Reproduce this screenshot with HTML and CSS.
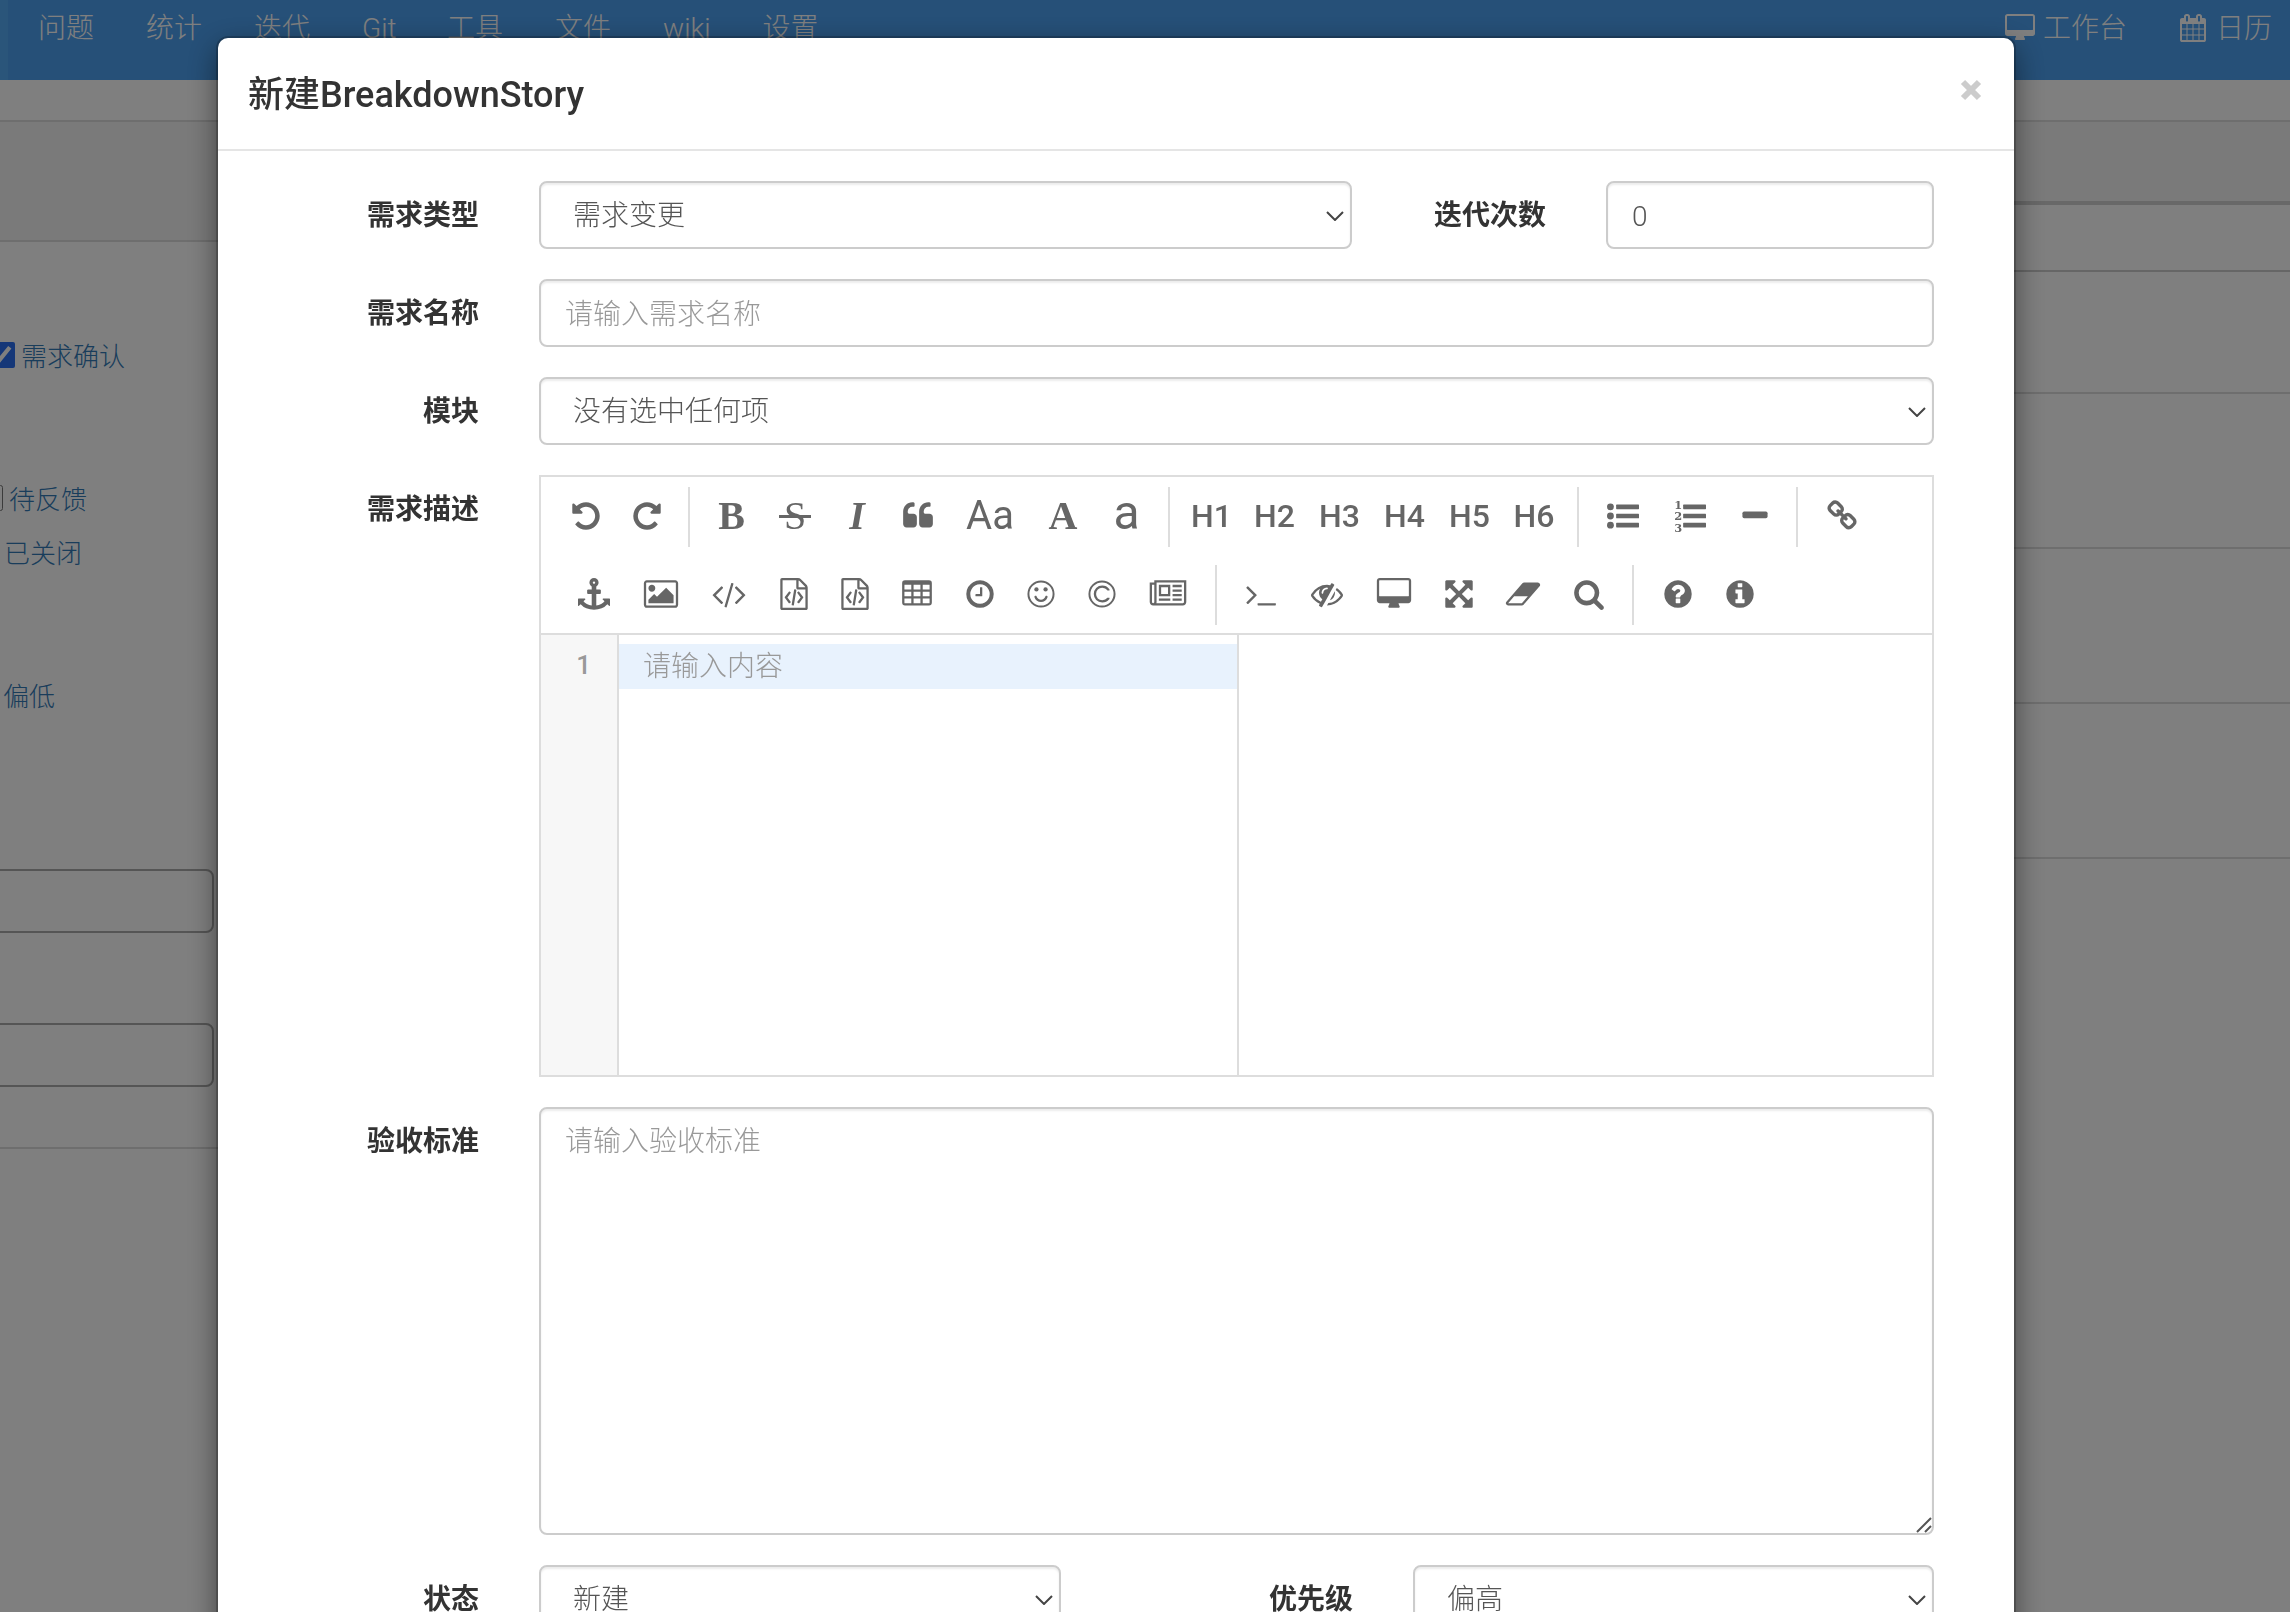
FILE: index.html
```html
<!DOCTYPE html>
<html lang="zh-CN">
<head>
<meta charset="utf-8">
<title>新建BreakdownStory</title>
<link rel="stylesheet" href="styles.css">
</head>
<body>
<svg width="0" height="0" class="sprite" aria-hidden="true">
  <symbol id="i-desktop" viewBox="0 0 1792 1792"><path d="M1728 992v-832q0-13-9.500-22.500t-22.500-9.500h-1600q-13 0-22.500 9.500t-9.500 22.500v832q0 13 9.500 22.500t22.500 9.500h1600q13 0 22.500-9.500t9.500-22.500zm128-832v1088q0 66-47 113t-113 47h-544q0 37 16 77.500t32 71 16 43.500q0 26-19 45t-45 19h-512q-26 0-45-19t-19-45q0-14 16-44t32-70 16-78h-544q-66 0-113-47t-47-113v-1088q0-66 47-113t113-47h1600q66 0 113 47t47 113z"/></symbol>
  <symbol id="i-undo" viewBox="0 0 1792 1792"><path d="M1664 896q0 156-61 298t-164 245-245 164-298 61q-172 0-327-72.500t-264-204.500q-7-10-6.500-22.500t8.500-20.500l137-138q10-9 25-9 16 2 23 12 73 95 179 147t225 52q104 0 198.500-40.500t163.500-109.500 109.500-163.500 40.500-198.500-40.500-198.500-109.500-163.500-163.500-109.500-198.500-40.500q-98 0-188 35.500t-160 101.500l137 138q31 30 14 69-17 40-59 40h-448q-26 0-45-19t-19-45v-448q0-42 40-59 39-17 69 14l130 129q107-101 244.500-156.500t284.500-55.500q156 0 298 61t245 164 164 245 61 298z"/></symbol>
  <symbol id="i-file" viewBox="0 0 1792 1792"><path d="M1596 380q28 28 48 76t20 88v1152q0 40-28 68t-68 28h-1344q-40 0-68-28t-28-68v-1600q0-40 28-68t68-28h896q40 0 88 20t76 48zm-444-244v376h376q-10-29-22-41l-313-313q-12-12-41-22zm384 1528v-1024h-416q-40 0-68-28t-28-68v-416h-768v1536h1280z"/><path transform="translate(128 0)" d="M480 768q8-11 21-12.500t24 6.500l51 38q11 8 12.500 21t-6.500 24l-182 243 182 243q8 11 6.500 24t-12.500 21l-51 38q-11 8-24 6.500t-21-12.500l-226-301q-14-19 0-38zm802 301q14 19 0 38l-226 301q-8 11-21 12.500t-24-6.500l-51-38q-11-8-12.500-21t6.500-24l182-243-182-243q-8-11-6.500-24t12.500-21l51-38q11-8 24-6.500t21 12.500zm-620 461q-13-2-20.500-13t-5.500-24l138-831q2-13 13-20.500t24-5.500l63 10q13 2 20.500 13t5.500 24l-138 831q-2 13-13 20.500t-24 5.500z"/></symbol>
</svg>
<div class="page">
  <header class="topbar">
    <nav class="topnav">
      <a href="#">问题</a><a href="#">统计</a><a href="#">迭代</a><a href="#">Git</a><a href="#">工具</a><a href="#">文件</a><a href="#">wiki</a><a href="#">设置</a>
    </nav>
    <nav class="topnav tools">
      <a href="#"><svg class="icon" viewBox="0 0 1792 1792"><path d="M1728 992v-832q0-13-9.500-22.500t-22.500-9.500h-1600q-13 0-22.500 9.500t-9.500 22.500v832q0 13 9.500 22.500t22.500 9.500h1600q13 0 22.500-9.500t9.500-22.500zm128-832v1088q0 66-47 113t-113 47h-544q0 37 16 77.500t32 71 16 43.500q0 26-19 45t-45 19h-512q-26 0-45-19t-19-45q0-14 16-44t32-70 16-78h-544q-66 0-113-47t-47-113v-1088q0-66 47-113t113-47h1600q66 0 113 47t47 113z"/></svg>工作台</a>
      <a href="#"><svg class="icon" viewBox="0 0 1792 1792"><path d="M192 1664h288v-288h-288v288zm352 0h320v-288h-320v288zm-352-352h288v-320h-288v320zm352 0h320v-320h-320v320zm-352-384h288v-288h-288v288zm736 736h320v-288h-320v288zm-384-736h320v-288h-320v288zm768 736h288v-288h-288v288zm-384-352h320v-320h-320v320zm-352-864v-288q0-13-9.500-22.500t-22.500-9.500h-64q-13 0-22.500 9.500t-9.500 22.500v288q0 13 9.500 22.500t22.500 9.500h64q13 0 22.500-9.500t9.500-22.500zm736 864h288v-320h-288v320zm-384-384h320v-288h-320v288zm384 0h288v-288h-288v288zm32-480v-288q0-13-9.500-22.500t-22.500-9.500h-64q-13 0-22.500 9.500t-9.500 22.500v288q0 13 9.500 22.500t22.500 9.500h64q13 0 22.500-9.500t9.500-22.500zm384-64v1280q0 52-38 90t-90 38h-1408q-52 0-90-38t-38-90v-1280q0-52 38-90t90-38h128v-96q0-66 47-113t113-47h64q66 0 113 47t47 113v96h384v-96q0-66 47-113t113-47h64q66 0 113 47t47 113v96h128q52 0 90 38t38 90z"/></svg>日历</a>
    </nav>
  </header>
  <div class="columns">
    <aside class="filters">
      <div class="filters-head"></div>
      <div class="filters-body">
        <label class="check confirm"><input type="checkbox" checked>需求确认</label>
        <label class="check feedback"><input type="checkbox">待反馈</label>
        <a class="check closed" href="#">已关闭</a>
        <a class="check low" href="#">偏低</a>
        <input class="filter-input" type="text" aria-label="开始">
        <input class="filter-input" type="text" aria-label="结束">
      </div>
    </aside>
    <main class="list">
      <div class="list-head"></div>
      <div class="list-title"></div>
      <div class="list-row first"></div>
      <div class="list-row"></div>
      <div class="list-row"></div>
      <div class="list-row"></div>
    </main>
  </div>
</div>

<div class="overlay">
  <section class="modal" role="dialog" aria-labelledby="dialog-title">
    <header class="modal-head">
      <h1 id="dialog-title">新建BreakdownStory</h1>
      <button class="close" type="button" aria-label="关闭"><svg viewBox="0 0 22 22"><path d="M3 3L19 19M19 3L3 19" stroke="currentColor" stroke-width="6"/></svg></button>
    </header>
    <form class="form">
      <div class="field">
        <label for="type">需求类型</label>
        <div class="control split-count">
          <div class="select"><select id="type"><option>需求变更</option></select><svg viewBox="0 0 18 10"><path d="M1 1l8 8 8-8"/></svg></div>
          <label for="count">迭代次数</label>
          <input id="count" class="text" type="text" value="0">
        </div>
      </div>
      <div class="field">
        <label for="name">需求名称</label>
        <div class="control"><input id="name" class="text" type="text" placeholder="请输入需求名称"></div>
      </div>
      <div class="field">
        <label for="module">模块</label>
        <div class="control"><div class="select"><select id="module"><option>没有选中任何项</option></select><svg viewBox="0 0 18 10"><path d="M1 1l8 8 8-8"/></svg></div></div>
      </div>
      <div class="field">
        <label for="desc">需求描述</label>
        <div class="control">
          <div class="editor">
            <div class="toolbar">
              <div class="tools-row">
                <button type="button" aria-label="撤销"><svg class="icon"><use href="#i-undo"/></svg></button>
                <button type="button" aria-label="重做"><svg class="icon" viewBox="0 0 1792 1792"><use href="#i-undo" width="1792" height="1792" transform="translate(1792 0) scale(-1 1)"/></svg></button>
                <span class="divider"></span>
                <button type="button" class="serif">B</button>
                <button type="button" class="serif strike w66">S</button>
                <button type="button" class="serif italic w58">I</button>
                <button type="button" class="w64" aria-label="引用"><svg class="icon" viewBox="0 0 1792 1792"><path d="M832 960v384q0 80-56 136t-136 56h-384q-80 0-136-56t-56-136v-704q0-104 40.500-198.500t109.500-163.500 163.500-109.500 198.500-40.500h64q26 0 45 19t19 45v128q0 26-19 45t-45 19h-64q-106 0-181 75t-75 181v32q0 40 28 68t68 28h224q80 0 136 56t56 136zm896 0v384q0 80-56 136t-136 56h-384q-80 0-136-56t-56-136v-704q0-104 40.500-198.500t109.500-163.500 163.500-109.500 198.500-40.500h64q26 0 45 19t19 45v128q0 26-19 45t-45 19h-64q-106 0-181 75t-75 181v32q0 40 28 68t68 28h224q80 0 136 56t56 136z"/></svg></button>
                <button type="button" class="case w80">Aa</button>
                <button type="button" class="serif w66">A</button>
                <button type="button" class="case lower">a</button>
                <span class="divider"></span>
                <button type="button" class="heading">H1</button>
                <button type="button" class="heading w65">H2</button>
                <button type="button" class="heading w65">H3</button>
                <button type="button" class="heading w65">H4</button>
                <button type="button" class="heading w65">H5</button>
                <button type="button" class="heading w64">H6</button>
                <span class="divider"></span>
                <button type="button" class="w66" aria-label="无序列表"><svg class="icon" viewBox="0 0 1792 1792"><circle cx="192" cy="384" r="192"/><circle cx="192" cy="896" r="192"/><circle cx="192" cy="1408" r="192"/><rect x="512" y="256" width="1280" height="256" rx="32"/><rect x="512" y="768" width="1280" height="256" rx="32"/><rect x="512" y="1280" width="1280" height="256" rx="32"/></svg></button>
                <button type="button" class="w68" aria-label="有序列表"><svg class="icon" viewBox="0 0 1792 1792"><g class="digits"><text x="10" y="496">1</text><text x="10" y="1136">2</text><text x="10" y="1776">3</text></g><rect x="512" y="256" width="1280" height="256" rx="32"/><rect x="512" y="768" width="1280" height="256" rx="32"/><rect x="512" y="1280" width="1280" height="256" rx="32"/></svg></button>
                <button type="button" aria-label="横线"><svg class="icon" viewBox="0 0 1792 1792"><rect x="192" y="640" width="1408" height="384" rx="96"/></svg></button>
                <span class="divider"></span>
                <button type="button" class="w66" aria-label="链接"><svg class="icon" viewBox="0 0 1792 1792"><path d="M1520 1216q0-40-28-68l-208-208q-28-28-68-28-42 0-72 32 3 3 19 18.500t21.500 21.500 15 19 13 25.500 3.500 27.500q0 40-28 68t-68 28q-15 0-27.500-3.500t-25.500-13-19-15-21.500-21.500-18.500-19q-33 31-33 73 0 40 28 68l206 207q27 27 68 27 40 0 68-26l147-146q28-28 28-67zm-703-705q0-40-28-68l-206-207q-28-28-68-28-39 0-68 27l-147 146q-28 28-28 67 0 40 28 68l208 208q27 27 68 27 42 0 72-31-3-3-19-18.500t-21.500-21.500-15-19-13-25.500-3.500-27.500q0-40 28-68t68-28q15 0 27.500 3.500t25.500 13 19 15 21.500 21.500 18.500 19q33-31 33-73zm895 705q0 120-85 203l-147 146q-83 83-203 83-121 0-204-85l-206-207q-83-83-83-203 0-123 88-209l-88-88q-86 88-208 88-120 0-204-84l-208-208q-84-84-84-204t85-203l147-146q83-83 203-83 121 0 204 85l206 207q83 83 83 203 0 123-88 209l88 88q86-88 208-88 120 0 204 84l208 208q84 84 84 204z"/></svg></button>
              </div>
              <div class="tools-row second">
                <button type="button" class="w66" aria-label="锚点"><svg class="icon" viewBox="0 0 1792 1792"><path d="M960 256q0-26-19-45t-45-19-45 19-19 45 19 45 45 19 45-19 19-45zm832 928v352q0 22-20 30-8 2-12 2-13 0-23-9l-93-93q-119 143-318.500 226.500t-429.500 83.500-429.500-83.500-318.500-226.500l-93 93q-9 9-23 9-4 0-12-2-20-8-20-30v-352q0-14 9-23t23-9h352q22 0 30 20 8 19-7 35l-100 100q67 91 189.500 153.500t271.500 82.500v-647h-192q-26 0-45-19t-19-45v-128q0-26 19-45t45-19h192v-163q-58-34-93-92.500t-35-128.500q0-106 75-181t181-75 181 75 75 181q0 70-35 128.500t-93 92.500v163h192q26 0 45 19t19 45v128q0 26-19 45t-45 19h-192v647q149-20 271.500-82.500t189.500-153.500l-100-100q-15-16-7-35 8-20 30-20h352q14 0 23 9t9 23z"/></svg></button>
                <button type="button" class="w68" aria-label="图片"><svg class="icon" viewBox="0 0 1792 1792"><path d="M576 576q0 80-56 136t-136 56-136-56-56-136 56-136 136-56 136 56 56 136zm1024 384v448h-1408v-192l320-320 160 160 512-512zm96-704h-1600q-13 0-22.500 9.500t-9.500 22.500v1216q0 13 9.500 22.500t22.500 9.500h1600q13 0 22.500-9.500t9.500-22.500v-1216q0-13-9.500-22.500t-22.500-9.500zm160 32v1216q0 66-47 113t-113 47h-1600q-66 0-113-47t-47-113v-1216q0-66 47-113t113-47h1600q66 0 113 47t47 113z"/></svg></button>
                <button type="button" class="w68" aria-label="行内代码"><svg class="icon" viewBox="0 0 1792 1792"><path d="M553 1399l-50 50q-10 10-23 10t-23-10l-466-466q-10-10-10-23t10-23l466-466q10-10 23-10t23 10l50 50q10 10 10 23t-10 23l-393 393 393 393q10 10 10 23t-10 23zm591-1067l-373 1291q-4 13-15.500 19.500t-23.500 2.500l-62-17q-13-4-19.500-15.500t-2.500-24.500l373-1291q4-13 15.500-19.500t23.500-2.500l62 17q13 4 19.500 15.500t2.500 24.500zm657 651l-466 466q-10 10-23 10t-23-10l-50-50q-10-10-10-23t10-23l393-393-393-393q-10-10-10-23t10-23l50-50q10-10 23-10t23 10l466 466q10 10 10 23t-10 23z"/></svg></button>
                <button type="button" aria-label="代码块"><svg class="icon"><use href="#i-file"/></svg></button>
                <button type="button" aria-label="预格式文本"><svg class="icon"><use href="#i-file"/></svg></button>
                <button type="button" class="w64" aria-label="表格"><svg class="icon" viewBox="0 0 1792 1792"><path fill-rule="evenodd" d="M224 128h1344q160 0 160 160v1088q0 160-160 160h-1344q-160 0-160-160v-1088q0-160 160-160zM192 384v256h384v-256zM704 384v256h384v-256zM1216 384v256h384v-256zM192 768v256h384v-256zM704 768v256h384v-256zM1216 768v256h384v-256zM192 1152v256h384v-256zM704 1152v256h384v-256zM1216 1152v256h384v-256z"/></svg></button>
                <button type="button" aria-label="时间"><svg class="icon" viewBox="0 0 1792 1792"><path d="M1024 544v448q0 14-9 23t-23 9h-320q-14 0-23-9t-9-23v-64q0-14 9-23t23-9h224v-352q0-14 9-23t23-9h64q14 0 23 9t9 23zm416 352q0-148-73-273t-198-198-273-73-273 73-198 198-73 273 73 273 198 198 273 73 273-73 198-198 73-273zm224 0q0 209-103 385.500t-279.500 279.500-385.500 103-385.500-103-279.500-279.500-103-385.500 103-385.500 279.500-279.500 385.500-103 385.500 103 279.500 279.500 103 385.500z"/></svg></button>
                <button type="button" aria-label="表情"><svg class="icon" viewBox="0 0 1792 1792"><circle class="line" cx="896" cy="896" r="704"/><circle cx="640" cy="640" r="120"/><circle cx="1152" cy="640" r="120"/><path d="M1262 1075q-37 121-138 195t-228 74-228-74-138-195q-8-25 4-48.500t38-31.500q25-8 48.500 4t31.500 38q25 80 92.500 129.500t151.500 49.500 151.500-49.500 92.500-129.500q8-26 32-38t49-4 37 31.500 4 48.500z"/></svg></button>
                <button type="button" aria-label="特殊符号"><svg class="icon" viewBox="0 0 1792 1792"><circle class="line" cx="896" cy="896" r="704"/><path class="line thick" d="M1250 700v-50Q1120 485 910 485C670 485 500 660 500 896S670 1307 910 1307Q1120 1307 1250 1150v-50"/></svg></button>
                <button type="button" class="w72" aria-label="分页"><svg class="icon" viewBox="0 0 1792 1792"><path transform="translate(-128 0)" d="M1024 512h-384v384h384v-384zm128 640v128h-640v-128h640zm0-768v640h-640v-640h640zm640 768v128h-512v-128h512zm0-256v128h-512v-128h512zm0-256v128h-512v-128h512zm0-256v128h-512v-128h512zm-1536 960v-960h-128v960q0 26 19 45t45 19 45-19 19-45zm1664 0v-1088h-1536v1088q0 33-11 64h1483q26 0 45-19t19-45zm128-1216v1216q0 80-56 136t-136 56h-1664q-80 0-136-56t-56-136v-1088h256v-128h1792z"/></svg></button>
                <span class="divider"></span>
                <button type="button" class="w66" aria-label="跳转到行"><svg class="icon" viewBox="0 0 1792 1792"><path d="M649 983l-466 466q-10 10-23 10t-23-10l-50-50q-10-10-10-23t10-23l393-393-393-393q-10-10-10-23t10-23l50-50q10-10 23-10t23 10l466 466q10 10 10 23t-10 23zm1079 457v64q0 14-9 23t-23 9h-960q-14 0-23-9t-9-23v-64q0-14 9-23t23-9h960q14 0 23 9t9 23z"/></svg></button>
                <button type="button" class="w66" aria-label="关闭实时预览"><svg class="icon" viewBox="0 0 1792 1792"><path d="M555 1335l78-141q-87-63-136-159t-49-203q0-121 61-225-229 117-381 353 167 258 427 375zm389-759q0-20-14-34t-34-14q-125 0-214.500 89.500t-89.500 214.500q0 20 14 34t34 14 34-14 14-34q0-86 61-147t147-61q20 0 34-14t14-34zm363-191q0 7-1 9-105 188-315 566t-316 567l-49 89q-10 16-28 16-12 0-134-70-16-10-16-28 0-12 44-87-143-65-263.500-173t-208.500-245q-20-31-20-69t20-69q153-235 380-371t496-136q89 0 180 17l54-97q10-16 28-16 5 0 18 6t31 15.500 33 18.500 31.500 18.500 19.500 11.500q16 10 16 27zm37 447q0 139-79 253.500t-209 164.500l280-502q8 45 8 84zm448 128q0 35-20 69-39 64-109 145-150 172-347.500 267t-419.500 95l74-132q212-18 392.500-137t301.500-307q-115-179-282-294l63-112q95 64 182.500 153t144.500 184q20 34 20 69z"/></svg></button>
                <button type="button" class="w68" aria-label="预览"><svg class="icon" viewBox="0 0 1792 1792"><path d="M1728 992v-832q0-13-9.500-22.500t-22.500-9.500h-1600q-13 0-22.500 9.500t-9.500 22.500v832q0 13 9.500 22.500t22.500 9.500h1600q13 0 22.500-9.500t9.500-22.500zm128-832v1088q0 66-47 113t-113 47h-544q0 37 16 77.500t32 71 16 43.500q0 26-19 45t-45 19h-512q-26 0-45-19t-19-45q0-14 16-44t32-70 16-78h-544q-66 0-113-47t-47-113v-1088q0-66 47-113t113-47h1600q66 0 113 47t47 113z"/></svg></button>
                <button type="button" aria-label="全屏"><svg class="icon" viewBox="0 0 1792 1792"><path d="M1411 541l-355 355 355 355 144-144q29-31 70-14 39 17 39 59v448q0 26-19 45t-45 19h-448q-42 0-59-40-17-39 14-69l144-144-355-355-355 355 144 144q31 30 14 69-17 40-59 40h-448q-26 0-45-19t-19-45v-448q0-42 40-59 39-17 69 14l144 144 355-355-355-355-144 144q-19 19-45 19-12 0-24-5-40-17-40-59v-448q0-26 19-45t45-19h448q42 0 59 40 17 39-14 69l-144 144 355 355 355-355-144-144q-31-30-14-69 17-40 59-40h448q26 0 45 19t19 45v448q0 42-39 59-13 5-25 5-26 0-45-19z"/></svg></button>
                <button type="button" class="w68" aria-label="清空"><svg class="icon" viewBox="0 0 1792 1792"><path d="M832 1408l336-384h-768l-336 384h768zm1013-1077q15 34 9.500 71.500t-30.500 65.500l-896 1024q-38 44-96 44h-768q-38 0-69.500-20.500t-47.500-54.500q-15-34-9.500-71.500t30.500-65.500l896-1024q38-44 96-44h768q38 0 69.500 20.500t47.500 54.500z"/></svg></button>
                <button type="button" class="w64" aria-label="搜索"><svg class="icon" viewBox="0 0 1792 1792"><path d="M1216 832q0-185-131.500-316.500t-316.500-131.500-316.500 131.500-131.500 316.500 131.500 316.500 316.500 131.500 316.500-131.500 131.500-316.500zm512 832q0 52-38 90t-90 38q-54 0-90-38l-343-342q-179 124-399 124-143 0-273.500-55.500t-225-150-150-225-55.500-273.500 55.500-273.500 150-225 225-150 273.500-55.500 273.500 55.500 225 150 150 225 55.500 273.500q0 220-124 399l343 343q37 37 37 90z"/></svg></button>
                <span class="divider"></span>
                <button type="button" class="w66" aria-label="帮助"><svg class="icon" viewBox="0 0 1792 1792"><path d="M1024 1376v-192q0-14-9-23t-23-9h-192q-14 0-23 9t-9 23v192q0 14 9 23t23 9h192q14 0 23-9t9-23zm256-672q0-88-55.500-163t-138.500-116-170-41q-243 0-371 213-15 24 8 42l132 100q7 6 19 6 16 0 25-12 53-68 86-92 34-24 86-24 48 0 85.500 26t37.500 59q0 38-20 61t-68 45q-63 28-115.500 86.500t-52.500 125.500v36q0 14 9 23t23 9h192q14 0 23-9t9-23q0-19 21.500-49.500t54.500-49.500q32-18 49-28.500t46-35 44.500-48 28-60.500 12.500-81zm384 192q0 209-103 385.500t-279.500 279.500-385.500 103-385.500-103-279.500-279.500-103-385.500 103-385.500 279.500-279.500 385.500-103 385.500 103 279.500 279.500 103 385.500z"/></svg></button>
                <button type="button" class="w58" aria-label="关于"><svg class="icon" viewBox="0 0 1792 1792"><path d="M1152 1376v-160q0-14-9-23t-23-9h-96v-512q0-14-9-23t-23-9h-320q-14 0-23 9t-9 23v160q0 14 9 23t23 9h96v320h-96q-14 0-23 9t-9 23v160q0 14 9 23t23 9h448q14 0 23-9t9-23zm-128-896v-160q0-14-9-23t-23-9h-192q-14 0-23 9t-9 23v160q0 14 9 23t23 9h192q14 0 23-9t9-23zm640 416q0 209-103 385.500t-279.500 279.500-385.500 103-385.500-103-279.500-279.500-103-385.500 103-385.500 279.500-279.500 385.500-103 385.500 103 279.500 279.500 103 385.500z"/></svg></button>
              </div>
            </div>
            <div class="editor-body">
              <div class="gutter">1</div>
              <textarea id="desc" class="code" placeholder="请输入内容"></textarea>
              <div class="preview"></div>
            </div>
          </div>
        </div>
      </div>
      <div class="field">
        <label for="accept">验收标准</label>
        <div class="control">
          <div class="area"><textarea id="accept" class="text" placeholder="请输入验收标准"></textarea><svg viewBox="0 0 16 16"><path d="M1 15L15 1M9 15l6-6"/></svg></div>
        </div>
      </div>
      <div class="field">
        <label for="status">状态</label>
        <div class="control split-status">
          <div class="select"><select id="status"><option>新建</option></select><svg viewBox="0 0 18 10"><path d="M1 1l8 8 8-8"/></svg></div>
          <label for="priority">优先级</label>
          <div class="select"><select id="priority"><option>偏高</option></select><svg viewBox="0 0 18 10"><path d="M1 1l8 8 8-8"/></svg></div>
        </div>
      </div>
    </form>
  </section>
</div>
</body>
</html>
```

FILE: styles.css
```css
* { box-sizing: border-box; }

html, body { height: 100%; }

body {
  margin: 0;
  overflow: hidden;
  background: #fff;
  color: #333;
  font-family: Roboto, "Noto Sans CJK SC", sans-serif;
  font-size: 28px;
  font-weight: 300;
  line-height: 40px;
}

a { color: inherit; text-decoration: none; }

button, input, select, textarea {
  margin: 0;
  font: inherit;
  color: inherit;
}

.sprite { display: block; }

.icon {
  width: 32px;
  height: 32px;
  flex: none;
  overflow: visible;
  fill: currentColor;
}

/* Page behind the dialog */

.topbar {
  display: flex;
  justify-content: space-between;
  height: 80px;
  padding: 9px 18px 0 30px;
  border-left: 8px solid #54aaf5;
  background: #4ca0f0;
  color: #fff;
}

.topnav { display: flex; gap: 52px; }

.topnav:first-child a:nth-child(4) { width: 33px; }

.tools a { display: flex; gap: 9px; }

.tools .icon { width: 28px; height: 28px; margin-top: 5px; }

.columns {
  display: grid;
  grid-template-columns: 218px 1fr;
  padding-top: 40px;
}

.filters-head {
  height: 122px;
  border-top: 2px solid #ddd;
  border-bottom: 2px solid #ddd;
  background: #f5f5f5;
}

.filters-body {
  display: flex;
  flex-direction: column;
  height: 907px;
  padding: 95px 4px 0 0;
  border-bottom: 2px solid #ddd;
  overflow: hidden;
}

.check {
  display: flex;
  align-items: center;
  height: 40px;
  flex: none;
  color: #337ab7;
  font-size: 26px;
}

.check input { width: 26px; height: 26px; margin: 0 6px 4px 0; flex: none; accent-color: #2a6ff0; }

.confirm { margin-left: -11px; margin-bottom: 103px; }
.feedback { margin-left: -23px; margin-bottom: 14px; }
.closed { margin-left: 4px; margin-bottom: 103px; }
.low { margin-left: 3px; margin-bottom: 152px; }

.filter-input {
  height: 64px;
  margin: 0 0 90px -10px;
  flex: none;
  border: 2px solid #aaa;
  border-radius: 8px;
  background: #fff;
}

.list-head {
  height: 85px;
  border-top: 2px solid #ddd;
  border-bottom: 4px solid #d0d0d0;
  background: #f5f5f5;
}

.list-title { height: 67px; border-bottom: 2px solid #ccc; }
.list-row { height: 155px; border-bottom: 2px solid #ddd; }
.list-row.first { height: 122px; }

/* Dialog */

.overlay {
  position: fixed;
  inset: 0;
  overflow: hidden;
  padding: 38px 276px 0 218px;
  background: rgba(0, 0, 0, .5);
}

.modal {
  border-radius: 10px;
  background: #fff;
  box-shadow: 0 0 0 2px rgba(0, 0, 0, .2), 0 10px 30px rgba(0, 0, 0, .5);
}

.modal-head {
  display: flex;
  justify-content: space-between;
  height: 113px;
  padding: 30px 30px 0;
  border-bottom: 2px solid #e5e5e5;
}

.modal-head h1 {
  margin: 0;
  font-size: 36px;
  font-weight: 500;
  line-height: 54px;
}

.close {
  width: 26px;
  height: 44px;
  padding: 0;
  border: 0;
  background: none;
  color: #ccc;
}

.close svg { display: block; width: 22px; height: 22px; margin: auto; }

.form {
  display: flex;
  flex-direction: column;
  gap: 30px;
  padding: 30px 50px 60px 0;
}

.field { display: grid; grid-template-columns: 1fr 5fr; }

.form label {
  padding: 15px 30px 0 0;
  font-weight: 700;
  text-align: right;
}

.control { min-width: 0; padding: 0 30px; }

.split-count { display: grid; grid-template-columns: 813fr 254fr 328fr; }

.split-status { display: grid; grid-template-columns: 522fr 352fr 521fr; }

.split-count label,
.split-status label { padding-right: 60px; }

.text, .select select {
  display: block;
  width: 100%;
  height: 68px;
  padding: 2px 24px 0;
  border: 2px solid #ccc;
  border-radius: 8px;
  background: #fff;
  box-shadow: inset 0 2px 2px rgba(0, 0, 0, .075);
  color: #555;
  outline: 0;
}

.select { position: relative; }

.select select { padding: 2px 32px 0; appearance: none; }

.select svg {
  position: absolute;
  right: 8px;
  top: 30px;
  width: 18px;
  height: 10px;
  fill: none;
  stroke: #444;
  stroke-width: 2;
  pointer-events: none;
}

::placeholder { color: #999; opacity: 1; }

.area { position: relative; }

.area textarea { height: 428px; padding: 13px 24px; resize: vertical; }

.area textarea::-webkit-resizer { background: transparent; }

.area svg {
  position: absolute;
  right: 2px;
  bottom: 2px;
  width: 16px;
  height: 16px;
  stroke: #555;
  stroke-width: 2;
  pointer-events: none;
}

/* Markdown editor */

.editor { border: 2px solid #ddd; color: #666; }

.toolbar {
  display: flex;
  flex-direction: column;
  gap: 4px;
  padding: 3px 0 1px 14px;
  border-bottom: 2px solid #ddd;
}

.tools-row { display: flex; align-items: center; height: 74px; }

.tools-row.second { padding-left: 6px; }

.tools-row button {
  display: flex;
  align-items: center;
  justify-content: center;
  width: 61px;
  height: 60px;
  flex: none;
  padding: 0 0 2px;
  border: 0;
  background: none;
}

.tools-row .w58 { width: 58px; }
.tools-row .w64 { width: 64px; }
.tools-row .w65 { width: 65px; }
.tools-row .w66 { width: 66px; }
.tools-row .w68 { width: 68px; }
.tools-row .w72 { width: 72px; }
.tools-row .w80 { width: 80px; }

.divider { width: 2px; height: 60px; margin: 0 11px; flex: none; background: #ddd; }

.tools-row .serif { font: bold 40px/40px "Liberation Serif", serif; }
.tools-row .italic { font-style: italic; }
.tools-row .strike { position: relative; font-weight: 400; }

.strike::after {
  content: "";
  position: absolute;
  left: 17px;
  right: 17px;
  top: 28px;
  height: 3px;
  background: #666;
}

.tools-row .case { font: 400 40px/40px Roboto, sans-serif; }
.tools-row .lower { font-size: 48px; padding-bottom: 8px; }
.tools-row .heading { font: 500 32px/40px Roboto, sans-serif; }

.digits { font: bold 640px "DejaVu Serif", serif; }

.line { fill: none; stroke: currentColor; stroke-width: 110; }
.thick { stroke-width: 130; }

.editor-body {
  display: grid;
  grid-template-columns: 78px 620fr 694fr;
  height: 440px;
}

.gutter {
  padding: 10px 26px 0 0;
  border-right: 2px solid #ddd;
  background: #f7f7f7;
  color: #999;
  font-size: 26px;
  font-weight: 500;
  text-align: right;
}

.code {
  width: 100%;
  height: 100%;
  padding: 12px 24px;
  border: 0;
  border-right: 2px solid #ddd;
  background: linear-gradient(#e8f2fd, #e8f2fd) 0 9px / 100% 45px no-repeat;
  outline: 0;
  resize: none;
}
```
